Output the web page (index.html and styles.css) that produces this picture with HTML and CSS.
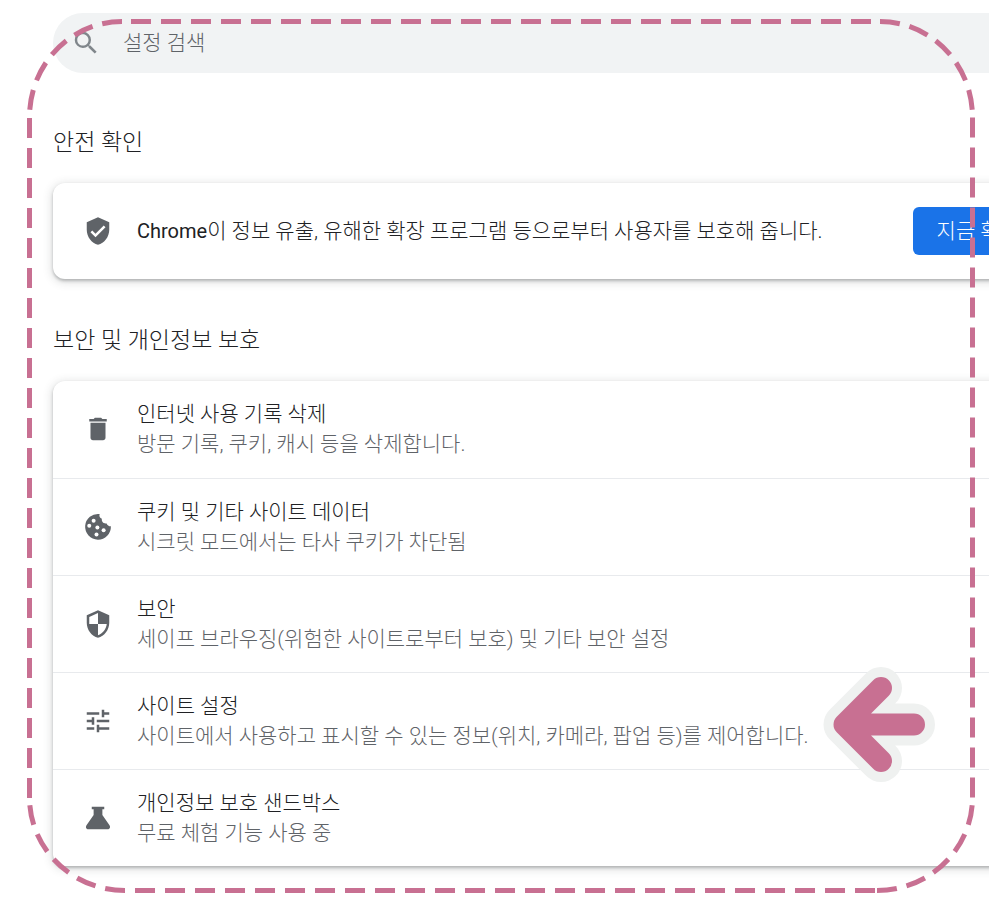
FILE: index.html
```html
<!DOCTYPE html>
<html lang="ko">
<head>
  <meta charset="UTF-8" />
  <meta name="viewport" content="width=device-width, initial-scale=1.0"/>
  <title>설정 - 보안 및 개인정보 보호</title>
  <link rel="stylesheet" href="styles.css">
</head>
<body>

<main class="settings">
  <label class="search">
    <svg class="search-icon" viewBox="0 0 24 24" aria-hidden="true"><path d="M15.5 14h-.79l-.28-.27A6.471 6.471 0 0 0 16 9.5 6.5 6.5 0 1 0 9.500 16c1.610 0 3.090-.59 4.230-1.570l.27.28v.79l5 4.990L20.490 19l-4.990-5zm-6 0C7.010 14 5 11.990 5 9.500S7.010 5 9.500 5 14 7.010 14 9.500 11.990 14 9.500 14z"/></svg>
    <input type="search" placeholder="설정 검색" aria-label="설정 검색" />
  </label>

  <h2>안전 확인</h2>
  <section class="card check">
    <svg class="icon" viewBox="0 0 24 24" aria-hidden="true"><path d="M12 1 3 5v6c0 5.550 3.840 10.740 9 12 5.160-1.260 9-6.450 9-12V5l-9-4zm-2 16-4-4 1.410-1.410L10 14.170l6.590-6.590L18 9l-8 8z"/></svg>
    <p class="check-text"><span class="latin">Chrome</span>이 정보 유출, 유해한 확장 프로그램 등으로부터 사용자를 보호해 줍니다.</p>
    <button class="action" type="button">지금 확인</button>
  </section>

  <h2>보안 및 개인정보 보호</h2>
  <nav class="card">
    <a class="row" href="#clear">
      <svg class="icon" viewBox="0 0 24 24" aria-hidden="true"><path d="M6 19c0 1.100.9 2 2 2h8c1.100 0 2-.9 2-2V7H6v12zM19 4h-3.500l-1-1h-5l-1 1H5v2h14V4z"/></svg>
      <span class="row-text">
        <span class="title">인터넷 사용 기록 삭제</span>
        <span class="desc">방문 기록, 쿠키, 캐시 등을 삭제합니다.</span>
      </span>
    </a>
    <a class="row" href="#cookies">
      <svg class="icon" viewBox="0 0 24 24" aria-hidden="true">
        <path d="M13.300 1.600A10.300 10.300 0 1 0 22.300 11.400C20.900 11.500 19.400 10.600 18.900 9.100C16.500 9.600 14.600 7.700 15.100 5.400C13.500 4.900 12.700 3.300 13.300 1.600z"/>
        <g class="crumbs"><circle cx="8.500" cy="7" r="1.600"/><circle cx="5" cy="11" r="1.600"/><circle cx="11.500" cy="12.300" r="1.600"/><circle cx="16.500" cy="14.500" r="1.600"/><circle cx="10.800" cy="18" r="1.600"/></g>
      </svg>
      <span class="row-text">
        <span class="title">쿠키 및 기타 사이트 데이터</span>
        <span class="desc">시크릿 모드에서는 타사 쿠키가 차단됨</span>
      </span>
    </a>
    <a class="row" href="#security">
      <svg class="icon" viewBox="0 0 24 24" aria-hidden="true"><path d="M12 1 3 5v6c0 5.550 3.840 10.740 9 12 5.160-1.260 9-6.450 9-12V5l-9-4zm0 10.990h7c-.53 4.120-3.280 7.790-7 8.940V12H5V6.300l7-3.110v8.800z"/></svg>
      <span class="row-text">
        <span class="title">보안</span>
        <span class="desc">세이프 브라우징(위험한 사이트로부터 보호) 및 기타 보안 설정</span>
      </span>
    </a>
    <a class="row" href="#content">
      <svg class="icon" viewBox="0 0 24 24" aria-hidden="true"><path d="M3 17v2h6v-2H3zM3 5v2h10V5H3zm10 16v-2h8v-2h-8v-2h-2v6h2zM7 9v2H3v2h4v2h2V9H7zm14 4v-2H11v2h10zm-6-4h2V7h4V5h-4V3h-2v6z"/></svg>
      <span class="row-text">
        <span class="title">사이트 설정</span>
        <span class="desc">사이트에서 사용하고 표시할 수 있는 정보(위치, 카메라, 팝업 등)를 제어합니다.</span>
      </span>
    </a>
    <a class="row" href="#sandbox">
      <svg class="icon" viewBox="0 0 24 24" aria-hidden="true"><path d="M7 3h10v2H15.500v4.500l5.700 8.300c1 1.800.2 3.200-1.500 3.200H4.300c-1.700 0-2.500-1.400-1.500-3.200L8.500 9.500V5H7z"/></svg>
      <span class="row-text">
        <span class="title">개인정보 보호 샌드박스</span>
        <span class="desc">무료 체험 기능 사용 중</span>
      </span>
    </a>
  </nav>
</main>

<!-- guide marks over the settings page -->
<svg class="marks" width="989" height="906" viewBox="0 0 989 906" aria-hidden="true">
  <path class="frame" d="M871 21.500H131M972.500 797.500V117.500M29.500 118V798M135 890.500H875"/>
  <path class="frame" d="M880 21.500A92.500 95.500 0 0 1 972.500 117M122 21.500A92.500 95.500 0 0 0 29.500 117M877 890.500A95.500 93 0 0 0 972.500 797.500M125 890.500A95.500 93 0 0 1 29.500 797.500"/>
  <path class="arrow-edge" d="M881 688 844.500 724.500 881 761M844.500 724.500H914"/>
  <path class="arrow" d="M881 688 844.500 724.500 881 761M844.500 724.500H914"/>
</svg>

</body>
</html>
```
FILE: styles.css
```css
* {
  box-sizing: border-box;
}
body {
  position: relative;
  margin: 0;
  overflow-x: hidden;
  background: #fff;
  color: #202124;
  font-family: Roboto, "Noto Sans CJK KR", sans-serif;
  font-size: 21px;
  font-weight: 300;
  line-height: 30px;
}
.settings {
  min-width: 1020px;
  margin: 13px 0 39px 53px;
}
.search {
  display: flex;
  align-items: center;
  gap: 22px;
  height: 60px;
  margin-bottom: 8px;
  padding: 0 18px;
  border-radius: 30px;
  background: #f1f3f4;
}
.search-icon {
  width: 30px;
  height: 30px;
  fill: #80868b;
}
.search input {
  flex: 1;
  padding: 0;
  border: none;
  outline: none;
  background: none;
  color: #202124;
  font: inherit;
}
.search input::placeholder {
  color: #5f6368;
}
h2 {
  margin: 0;
  padding: 46px 0 24px;
  font-size: 23px;
  font-weight: 300;
  line-height: 32px;
}
.card {
  border-radius: 12px;
  background: #fff;
  box-shadow: 0 2px 3px rgba(60, 64, 67, 0.3), 0 2px 9px 2px rgba(60, 64, 67, 0.15);
}
.check {
  display: flex;
  align-items: center;
  height: 96px;
  padding: 0 30px;
}
.icon {
  flex: none;
  width: 30px;
  height: 30px;
  margin-right: 24px;
  fill: #5f6368;
}
.check-text {
  flex: 1;
  margin: 0;
}
.latin {
  font-size: 20px;
  font-weight: 400;
}
.action {
  height: 48px;
  padding: 0 24px;
  border: none;
  border-radius: 6px;
  background: #1a73e8;
  color: #fff;
  font: inherit;
  cursor: pointer;
}
.row {
  display: flex;
  align-items: center;
  height: 97px;
  padding: 0 30px 1px;
  color: inherit;
  text-decoration: none;
}
.row + .row {
  border-top: 1px solid #e8eaed;
}
.title,
.desc {
  display: block;
}
.desc {
  color: #5f6368;
}
.crumbs {
  fill: #fff;
}
.marks {
  position: absolute;
  top: 0;
  left: 0;
  fill: none;
  pointer-events: none;
}
.frame {
  stroke: #c87092;
  stroke-width: 5;
  stroke-dasharray: 20 10;
}
.arrow-edge,
.arrow {
  stroke-linecap: round;
  stroke-linejoin: round;
}
.arrow-edge {
  stroke: #eff1f0;
  stroke-width: 42;
}
.arrow {
  stroke: #c87092;
  stroke-width: 22;
}
```
